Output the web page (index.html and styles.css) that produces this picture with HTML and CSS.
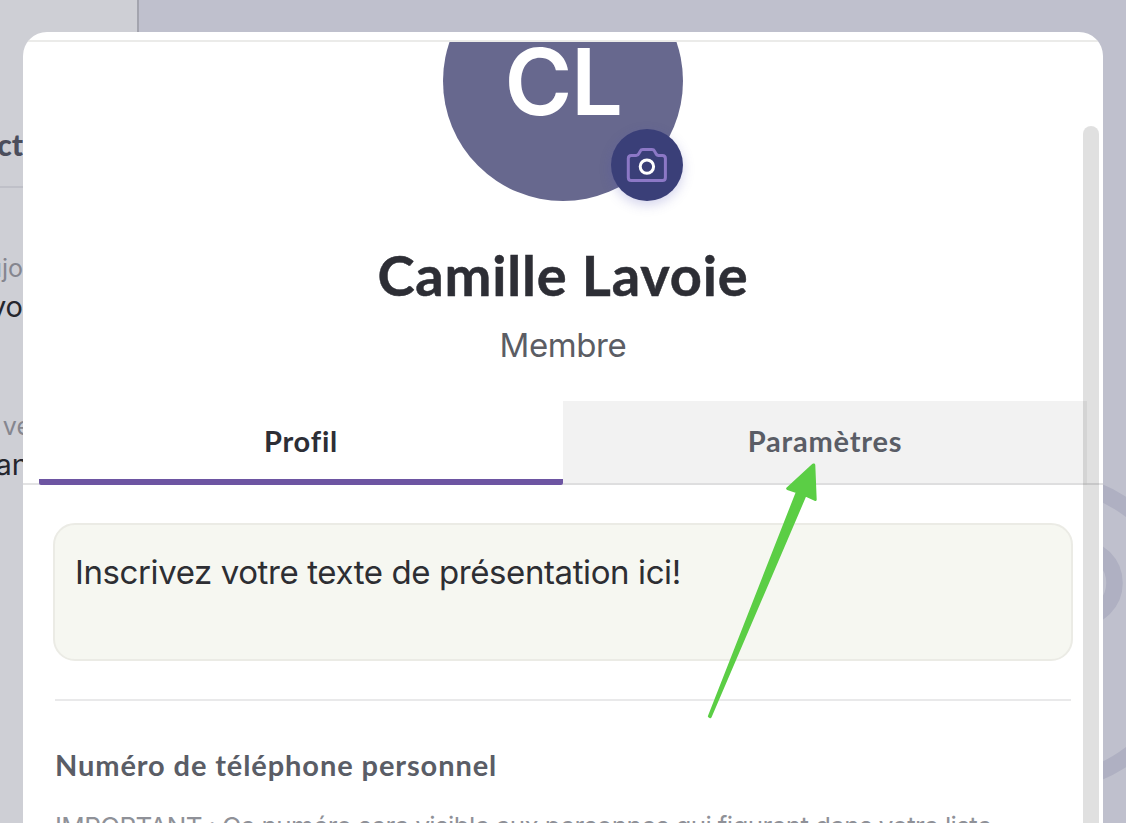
FILE: index.html
```html
<!DOCTYPE html>
<html lang="fr">
<head>
<meta charset="utf-8">
<title>Profil</title>
<link rel="stylesheet" href="styles.css">
</head>
<body>
<div class="app">
  <aside class="sidebar">
    <div class="side-head"><span>ct</span></div>
    <div class="side-item"><span class="side-date">ujo</span><span class="side-text">vo</span></div>
    <div class="side-item"><span class="side-date side-date-cut">ve</span><span class="side-text side-text-cut">an</span></div>
  </aside>
  <main class="backdrop">
    <svg class="ghost" viewBox="0 0 322 322">
      <circle cx="161" cy="161" r="153"/>
      <circle cx="202" cy="112" r="35.5"/>
    </svg>
  </main>
</div>

<section class="modal">
  <header class="modal-top"></header>
  <div class="modal-body">
    <div class="avatar">
      <span class="initials">CL</span>
      <button class="camera" aria-label="Photo">
        <svg viewBox="0 0 72 72">
          <path class="cam-body" d="M20.3 26.4H25.2C26.7 26.4 27.4 25.8 28 24.4L29.2 22.2C29.8 21 30.5 20.6 31.8 20.6H41C42.3 20.6 43 21 43.6 22.2L44.8 24.4C45.4 25.8 46.1 26.4 47.6 26.4H51.4Q54.4 26.4 54.4 29.4V48.4Q54.4 51.4 51.4 51.4H20.3Q17.3 51.4 17.3 48.4V29.400Q17.3 26.4 20.3 26.4Z"/>
          <circle class="cam-lens" cx="35.9" cy="37.6" r="6.7"/>
        </svg>
      </button>
    </div>
    <h1 class="name">Camille Lavoie</h1>
    <p class="role">Membre</p>
    <nav class="tabs">
      <a class="tab tab-active"><span>Profil</span></a>
      <a class="tab tab-idle"><span>Paramètres</span></a>
    </nav>
    <div class="content">
      <div class="bio"><span>Inscrivez votre texte de présentation ici!</span></div>
      <hr class="rule">
      <h2 class="field"><span>Numéro de téléphone personnel</span></h2>
      <p class="note"><span>IMPORTANT : Ce numéro sera visible aux personnes qui figurent dans votre liste</span></p>
    </div>
  </div>
  <div class="thumb"></div>
</section>

<svg class="arrow" viewBox="700 455 130 270">
  <path d="M813.2 465L787.7 488.6L796.6 491.5Q797.5 492 797 493L709.4 716.2L710.2 716.6L804.7 496Q805.3 494.7 806.5 495.3L815.200 499.5L813.8 465Z"/>
</svg>
</body>
</html>
```
FILE: styles.css
```css
* { box-sizing: border-box; }
body {
  margin: 0;
  width: 1126px;
  height: 823px;
  overflow: hidden;
  position: relative;
  font-family: Inter, "Liberation Sans", sans-serif;
}
h1, h2, p { margin: 0; font-weight: 400; white-space: nowrap; }

.app { display: flex; height: 823px; background: #bfc0cd; }
.sidebar {
  width: 139px;
  background: #cecfd5;
  border-right: 2px solid #a3a4ae;
}
.side-head {
  height: 188px;
  width: 23px;
  display: flex;
  justify-content: flex-end;
  padding-top: 126px;
  border-bottom: 2px solid #bfc0c8;
  font: 900 30px/36px Lato, sans-serif;
  color: #4b4e5c;
}
.side-item {
  width: 23px;
  height: 158px;
  padding-top: 63px;
  display: flex;
  flex-direction: column;
  align-items: flex-end;
}
.side-date { font-size: 25px; line-height: 34px; color: #85868f; }
.side-text { font-size: 29px; line-height: 36px; margin-top: 4px; color: #25262d; }
.side-date-cut { margin-right: -8px; }
.side-text-cut { margin-right: -6px; }

.backdrop { flex: 1; display: flex; padding: 471px 0 0 738px; overflow: hidden; }
.ghost { width: 322px; height: 322px; flex: none; fill: none; stroke: #afb0c2; stroke-width: 16.5px; }

.modal {
  position: absolute;
  left: 23px;
  top: 32px;
  width: 1080px;
  height: 791px;
  background: #fff;
  border-radius: 24px 24px 0 0;
  overflow: hidden;
}
.modal-top { height: 10px; border-bottom: 2px solid #ebebe9; }
.modal-body { height: 781px; overflow: hidden; display: flex; flex-direction: column; align-items: center; }

.avatar {
  flex: none;
  width: 240px;
  height: 240px;
  margin-top: -81px;
  border-radius: 50%;
  background: #67688e;
  display: flex;
  justify-content: center;
  align-items: center;
  position: relative;
}
.initials { font-size: 92px; font-weight: 600; line-height: 100px; letter-spacing: -1.5px; padding-top: 1px; color: #fff; }
.camera {
  position: absolute;
  right: 0;
  bottom: 0;
  width: 72px;
  height: 72px;
  padding: 0;
  border: 0;
  border-radius: 50%;
  background: #3a3f78;
  box-shadow: 0 4px 12px rgba(80, 80, 180, .25);
}
.camera svg { display: block; width: 72px; height: 72px; fill: none; }
.cam-body { stroke: #8c78c6; stroke-width: 3px; stroke-linejoin: round; }
.cam-lens { stroke: #fff; stroke-width: 3px; }

.name { margin-top: 39px; font: 700 56px/70px Lato, sans-serif; letter-spacing: .8px; color: #2d2e35; -webkit-text-stroke: .5px #2d2e35; }
.role { margin-top: 15px; font-size: 33px; line-height: 40px; letter-spacing: -.4px; color: #5b5d64; }

.tabs {
  flex: none;
  align-self: stretch;
  height: 84px;
  margin-top: 36px;
  padding: 0 16px;
  display: flex;
  background: linear-gradient(#e3e3e4, #e3e3e4) bottom / 100% 2px no-repeat;
}
.tab {
  flex: 1;
  display: flex;
  justify-content: center;
  align-items: center;
  font: 700 29px/36px Lato, sans-serif;
  letter-spacing: .8px;
  padding-bottom: 2px;
}
.tab-active { padding-bottom: 4px; color: #2d2e35; background: linear-gradient(#6d55a2, #6d55a2) bottom / 100% 6px no-repeat; border-radius: 0 0 2px 2px; }
.tab-idle { color: #5a5d66; background: #f2f2f2; border-bottom: 2px solid #dededf; }

.content { width: 1020px; padding-top: 38px; }
.bio {
  height: 138px;
  padding: 27px 20px;
  border: 2px solid #ebebe5;
  border-radius: 22px;
  background: #f6f7f1;
  font-size: 33px;
  line-height: 40px;
  letter-spacing: -.4px;
  color: #2d2e33;
  white-space: nowrap;
}
.rule { height: 2px; margin: 38px 2px 0; border: 0; background: #e9e9ea; }
.field { margin: 46px 0 0 2px; font: 700 29px/36px Lato, sans-serif; letter-spacing: .9px; color: #5a5d66; }
.note { margin: 27px 0 0 2px; font-size: 26px; line-height: 34px; letter-spacing: -.64px; color: #8f9198; }

.thumb {
  position: absolute;
  left: 1060px;
  top: 94px;
  width: 16px;
  height: 697px;
  border-radius: 8px 8px 0 0;
  background: rgba(0, 0, 0, .12);
}

.arrow {
  position: absolute;
  left: 700px;
  top: 455px;
  width: 130px;
  height: 270px;
  fill: #5bce45;
  stroke: #5bce45;
  stroke-width: 3px;
  stroke-linejoin: round;
}
```
